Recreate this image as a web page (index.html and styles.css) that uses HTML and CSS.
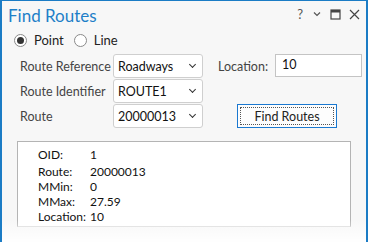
FILE: index.html
```html
<!DOCTYPE html>
<html>
  <head>
    <title>Find Routes</title>
    <link rel="stylesheet" href="styles.css">
  </head>
  <body>
    <div class="pane">
      <div class="pane-header">
        <div class="pane-title">Find Routes</div>
        <div class="pane-tools">
          <span class="tool help">?</span>
          <svg class="tool" width="10" height="10" viewBox="0 0 10 10">
            <path d="M2 3.5 L5 6.5 L8 3.5" fill="none" stroke="#555" stroke-width="1.2"/>
          </svg>
          <svg class="tool" width="11" height="11" viewBox="0 0 11 11">
            <rect x="1" y="1" width="9" height="9" fill="none" stroke="#444" stroke-width="1.2"/>
            <rect x="1" y="1" width="9" height="2.5" fill="#444"/>
          </svg>
          <svg class="tool" width="11" height="11" viewBox="0 0 11 11">
            <path d="M1 1 L10 10 M10 1 L1 10" stroke="#444" stroke-width="1.2"/>
          </svg>
        </div>
      </div>

      <div class="mode-row">
        <label class="radio"><span class="radio-dot checked"></span>Point</label>
        <label class="radio"><span class="radio-dot"></span>Line</label>
      </div>

      <div class="form">
        <div class="label">Route Reference</div>
        <div class="combo"><span>Roadways</span><span class="chev"></span></div>
        <div class="label loc-label">Location:</div>
        <div class="textbox">10</div>

        <div class="label">Route Identifier</div>
        <div class="combo"><span>ROUTE1</span><span class="chev"></span></div>
        <div class="spacer"></div>

        <div class="label">Route</div>
        <div class="combo"><span>20000013</span><span class="chev"></span></div>
        <button class="find-btn"><span>Find Routes</span></button>
      </div>

      <div class="results">
        <div class="res-row first"><span class="key">OID:</span><span>1</span></div>
        <div class="res-row"><span class="key">Route:</span><span>20000013</span></div>
        <div class="res-row"><span class="key">MMin:</span><span>0</span></div>
        <div class="res-row"><span class="key">MMax:</span><span>27.59</span></div>
        <div class="res-row"><span class="key">Location:</span><span>10</span></div>
      </div>

      <div class="fade"></div>
    </div>
  </body>
</html>
```

FILE: styles.css
```css
body {
  margin: 0;
  padding: 0;
  font-family: Lato, "Noto Sans", sans-serif;
  background-color: #fff;
}

.pane {
  position: relative;
  width: 364px;
  height: 241px;
  background-color: #f7f7f7;
  border-top: 1px solid #1b7cc5;
  border-left: 2px solid #1b7cc5;
  border-right: 2px solid #1b7cc5;
  overflow: hidden;
}

.pane-header {
  display: flex;
  justify-content: space-between;
  align-items: center;
  height: 30px;
  padding: 0 6px 0 6px;
}

.pane-title {
  font-size: 17px;
  color: #1e7fc8;
  margin-top: -2px;
}

.pane-tools {
  display: flex;
  align-items: center;
  gap: 8px;
  margin-top: -4px;
}

.tool {
  display: block;
}

.help {
  font-size: 13px;
  color: #555;
  margin-right: 1px;
}

.mode-row {
  display: flex;
  align-items: center;
  gap: 10px;
  padding-left: 12px;
  height: 18px;
}

.radio {
  display: flex;
  align-items: center;
  gap: 7px;
  font-size: 13px;
  color: #222;
}

.radio-dot {
  width: 11px;
  height: 11px;
  border: 1px solid #8a8a8a;
  border-radius: 50%;
  background-color: #fff;
  display: flex;
  align-items: center;
  justify-content: center;
}

.radio-dot.checked::after {
  content: "";
  width: 7px;
  height: 7px;
  border-radius: 50%;
  background-color: #333;
}

.form {
  display: grid;
  grid-template-columns: 93px 90px 57px 87px;
  grid-auto-rows: 24px;
  row-gap: 1px;
  column-gap: 0;
  padding: 5px 0 0 18px;
  align-items: center;
}

.label {
  font-size: 12.5px;
  color: #444;
}

.loc-label {
  margin-left: 15px;
  margin-right: -15px;
}

.combo {
  height: 22px;
  box-sizing: border-box;
  height: 24px;
  border: 1px solid #cfcfcf;
  border-radius: 3px;
  background-color: #fff;
  display: flex;
  align-items: center;
  justify-content: space-between;
  padding: 0 7px 0 4px;
  font-size: 12.5px;
  color: #111;
}

.chev {
  width: 4px;
  height: 4px;
  border-right: 1.3px solid #333;
  border-bottom: 1.3px solid #333;
  transform: rotate(45deg);
  margin-top: -3px;
}

.textbox {
  box-sizing: border-box;
  height: 23px;
  margin-left: 15px;
  margin-right: -15px;
  border: 1px solid #c4c4c4;
  background-color: #fff;
  padding: 2px 0 0 6px;
  font-size: 12.5px;
  color: #111;
  align-self: start;
}

.spacer {
  grid-column: 3 / 5;
}

.find-btn {
  grid-column: 3 / 5;
  justify-self: start;
  margin-left: 34px;
  width: 100px;
  height: 24px;
  padding: 2px;
  border: 1px solid #1a78d0;
  background-color: #fdfdfd;
  font-family: Lato, "Noto Sans", sans-serif;
  font-size: 12.5px;
  color: #222;
  display: flex;
}

.find-btn span {
  flex: 1;
  border: 1px dotted #555;
  display: flex;
  align-items: center;
  justify-content: center;
}

.results {
  margin: 13px 0 0 15px;
  width: 332px;
  height: 83px;
  background-color: #fff;
  border: 1px solid #b4b4b4;
  border-bottom-color: #dadada;
  padding: 5px 0 0 20px;
  box-sizing: border-box;
  width: 334px;
  height: 86px;
}

.res-row {
  display: flex;
  font-size: 12px;
  line-height: 15px;
  color: #111;
}

.res-row.first {
  margin-bottom: 2px;
}

.key {
  width: 52px;
}

.fade {
  position: absolute;
  left: -2px;
  right: -2px;
  bottom: 0;
  height: 22px;
  background: linear-gradient(to bottom, rgba(255, 255, 255, 0), rgba(255, 255, 255, 0.95));
}
```
